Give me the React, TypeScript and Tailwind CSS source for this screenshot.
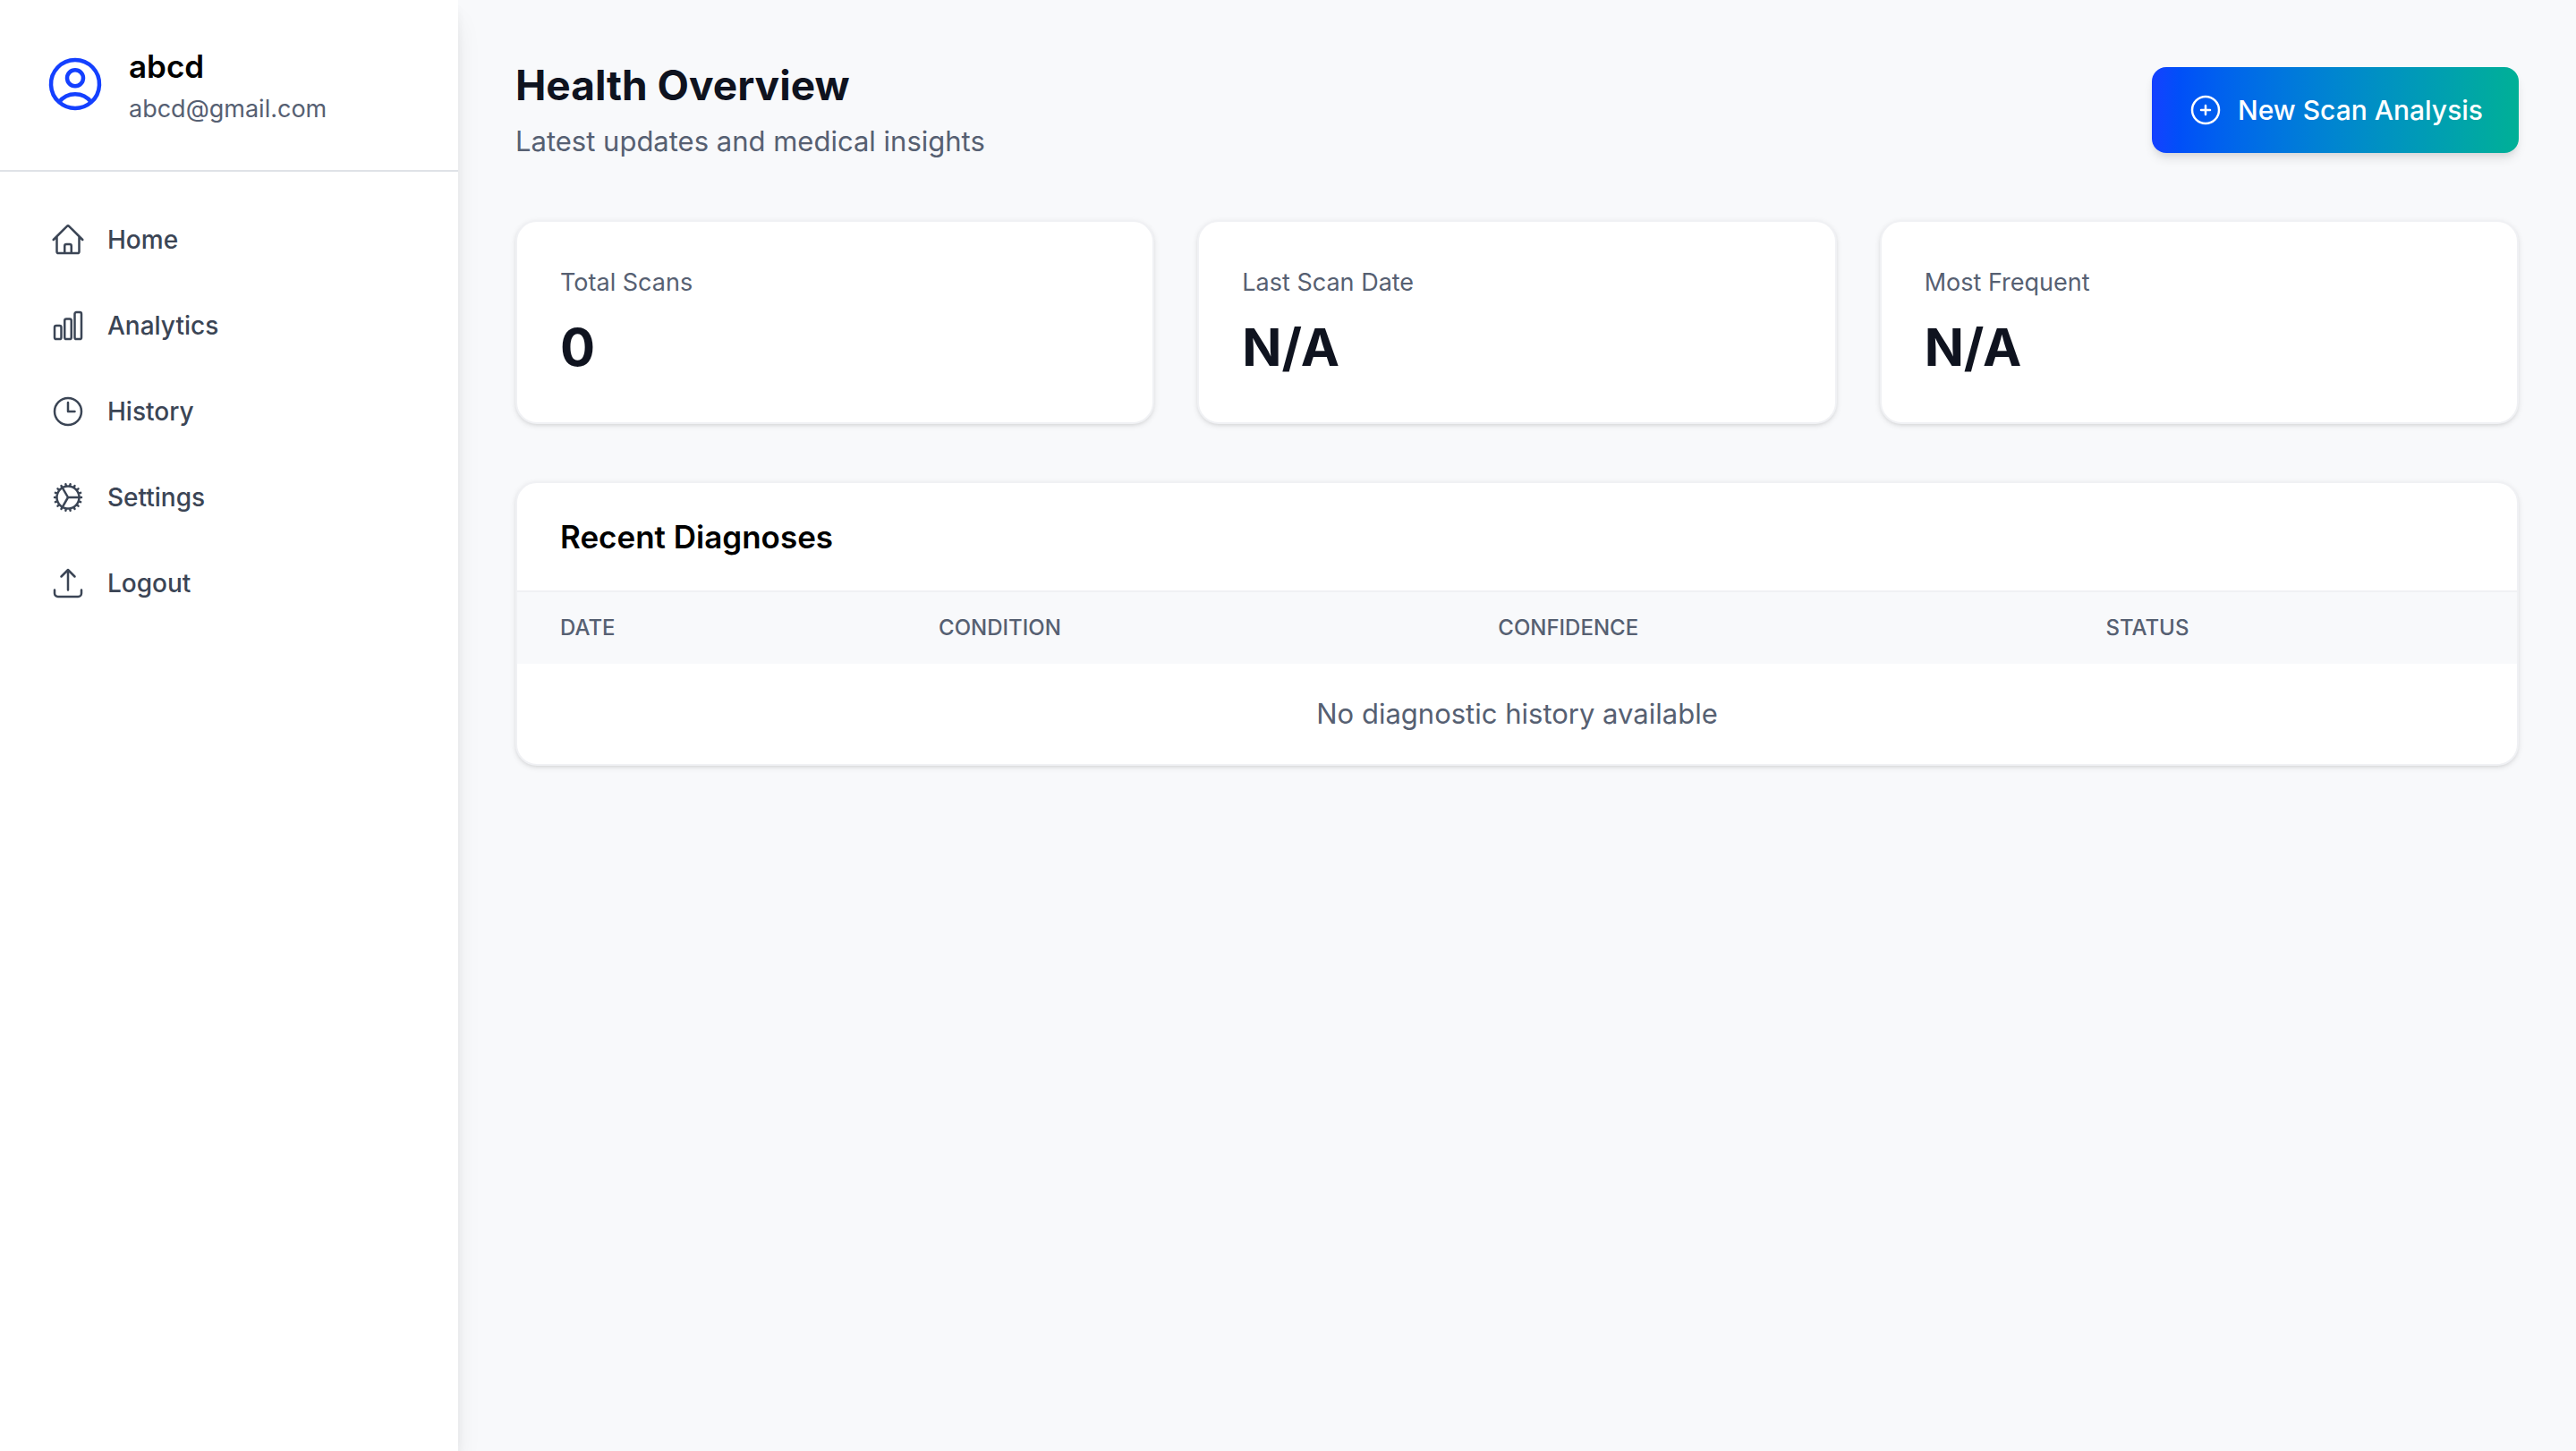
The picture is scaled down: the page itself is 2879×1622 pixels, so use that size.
import type { IconType } from "react-icons";
import {
  HiOutlineArrowUpTray,
  HiOutlineChartBar,
  HiOutlineClock,
  HiOutlineCog,
  HiOutlineHome,
  HiOutlinePlusCircle,
  HiOutlineUserCircle,
} from "react-icons/hi2";

const navItems: { label: string; icon: IconType }[] = [
  { label: "Home", icon: HiOutlineHome },
  { label: "Analytics", icon: HiOutlineChartBar },
  { label: "History", icon: HiOutlineClock },
  { label: "Settings", icon: HiOutlineCog },
  { label: "Logout", icon: HiOutlineArrowUpTray },
];

const stats = [
  { label: "Total Scans", value: "0" },
  { label: "Last Scan Date", value: "N/A" },
  { label: "Most Frequent", value: "N/A" },
];

const columns = ["Date", "Condition", "Confidence", "Status"];

const cardClass =
  "rounded-3xl border-2 border-[#f0f1f4] bg-white shadow-[0_2px_6px_rgba(0,0,0,0.1),0_2px_4px_-2px_rgba(0,0,0,0.1)]";

function Sidebar() {
  return (
    <aside className="relative z-10 w-[512px] shrink-0 bg-white shadow-[0_20px_30px_-6px_rgba(0,0,0,0.1),0_8px_12px_-4px_rgba(0,0,0,0.1)]">
      <div className="flex items-center gap-6 border-b-2 border-[#dfe2e7] px-12 pt-[46px] pb-12">
        <HiOutlineUserCircle className="size-18 shrink-0 text-[#1440ff]" />
        <div>
          <h2 className="text-[35px] leading-14 font-semibold text-black">abcd</h2>
          <p className="text-[27px] leading-10 text-[#566072]">abcd@gmail.com</p>
        </div>
      </div>
      <nav className="flex flex-col gap-2 p-8">
        {navItems.map(({ label, icon: Icon }) => (
          <a
            key={label}
            href="#"
            className="flex items-center gap-6 rounded-2xl p-6 text-[28px] leading-10 font-medium text-[#3b4555]"
          >
            <Icon className="size-10 shrink-0" />
            {label}
          </a>
        ))}
      </nav>
    </aside>
  );
}

export default function App() {
  return (
    <div className="flex min-h-screen bg-[#f8f9fb] font-['Inter',sans-serif]">
      <Sidebar />
      <main className="min-w-0 flex-1 p-16">
        <header className="mb-16 flex items-center justify-between">
          <div>
            <h1 className="text-[46px] leading-[62px] font-bold text-[#0f131f]">Health Overview</h1>
            <p className="mt-2 text-[31px] leading-12 text-[#566072]">
              Latest updates and medical insights
            </p>
          </div>
          <button
            type="button"
            className="flex items-center gap-4 rounded-2xl bg-linear-to-r from-[#1440ff] to-[#00b096] px-10 py-6 text-[30px] leading-12 font-medium text-white shadow-[0_8px_12px_-2px_rgba(0,0,0,0.1),0_4px_8px_-4px_rgba(0,0,0,0.1)]"
          >
            <HiOutlinePlusCircle className="size-10" />
            New Scan Analysis
          </button>
        </header>

        <section className="mb-16 grid grid-cols-3 gap-12">
          {stats.map(({ label, value }) => (
            <div key={label} className={`${cardClass} p-12`}>
              <p className="text-[27px] leading-10 text-[#566072]">{label}</p>
              <p className="mt-4 text-[58px] leading-18 font-bold text-[#0f131f]">{value}</p>
            </div>
          ))}
        </section>

        <section className={`${cardClass} overflow-hidden`}>
          <h2 className="border-b-2 border-[#f0f1f4] px-12 py-8 text-[35px] leading-14 font-semibold text-black">
            Recent Diagnoses
          </h2>
          <table className="w-full">
            <thead className="bg-[#f8f9fb]">
              <tr>
                {columns.map((column) => (
                  <th
                    key={column}
                    scope="col"
                    className="px-12 py-6 text-left text-[24px] leading-8 font-medium text-[#566072] uppercase"
                  >
                    {column}
                  </th>
                ))}
              </tr>
            </thead>
            <tbody>
              <tr>
                <td
                  colSpan={4}
                  className="px-12 py-8 text-center text-[31px] leading-12 text-[#566072]"
                >
                  No diagnostic history available
                </td>
              </tr>
            </tbody>
          </table>
        </section>
      </main>
    </div>
  );
}
